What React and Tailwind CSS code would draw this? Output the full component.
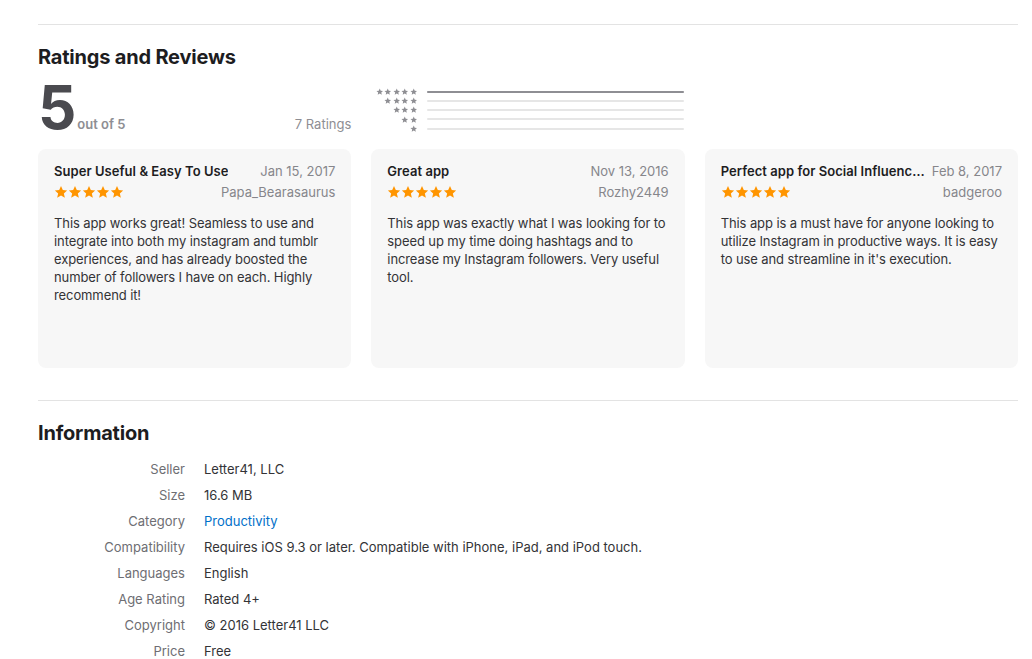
import React from "react";

const reviews = [
  {
    title: "Super Useful & Easy To Use",
    date: "Jan 15, 2017",
    author: "Papa_Bearasaurus",
    body: "This app works great! Seamless to use and integrate into both my instagram and tumblr experiences, and has already boosted the number of followers I have on each. Highly recommend it!",
  },
  {
    title: "Great app",
    date: "Nov 13, 2016",
    author: "Rozhy2449",
    body: "This app was exactly what I was looking for to speed up my time doing hashtags and to increase my Instagram followers. Very useful tool.",
  },
  {
    title: "Perfect app for Social Influencers",
    date: "Feb 8, 2017",
    author: "badgeroo",
    body: "This app is a must have for anyone looking to utilize Instagram in productive ways. It is easy to use and streamline in it's execution.",
  },
];

const info = [
  ["Seller", "Letter41, LLC"],
  ["Size", "16.6 MB"],
  ["Category", "Productivity", true],
  ["Compatibility", "Requires iOS 9.3 or later. Compatible with iPhone, iPad, and iPod touch."],
  ["Languages", "English"],
  ["Age Rating", "Rated 4+"],
  ["Copyright", "© 2016 Letter41 LLC"],
  ["Price", "Free"],
];

const Star = ({ className }) => (
  <svg viewBox="0 0 24 24" className={className}>
    <path
      fill="currentColor"
      d="M12 1.8l3.1 6.9 7.4.7-5.6 5 1.7 7.4L12 17.9l-6.6 3.9 1.7-7.4-5.6-5 7.4-.7z"
    />
  </svg>
);

const Histogram = () => {
  const rows = [5, 4, 3, 2, 1];
  return (
    <div className="flex flex-col pt-[10px]">
      {rows.map((n) => (
        <div key={n} className="flex items-center h-[9.25px]">
          <div className="w-[46px] flex justify-end gap-[1px] text-[#8e8e93]">
            {Array.from({ length: n }).map((_, i) => (
              <Star key={i} className="w-[7.5px] h-[7.5px]" />
            ))}
          </div>
          <div className="ml-[10px] w-[257px] h-[2px] bg-[#e6e6e6] rounded-full">
            {n === 5 && <div className="h-full w-full bg-[#8e8e93] rounded-full" />}
          </div>
        </div>
      ))}
    </div>
  );
};

const ReviewCard = ({ review }) => (
  <div className="bg-[#f7f7f7] rounded-[8px] h-[219px] px-[16px] pt-[13px]">
    <div className="flex items-baseline justify-between gap-[5px] text-[13px] leading-[18px]">
      <h3 className="font-semibold text-[#1d1d1f] truncate tracking-[0.05px]">{review.title}</h3>
      <span className="text-[#86868b] shrink-0">{review.date}</span>
    </div>
    <div className="flex items-center justify-between mt-[3px]">
      <div className="flex text-[#ff9500]">
        {Array.from({ length: 5 }).map((_, i) => (
          <Star key={i} className="w-[14px] h-[14px]" />
        ))}
      </div>
      <span className="text-[13px] leading-[18px] text-[#86868b]">{review.author}</span>
    </div>
    <p className="mt-[13px] text-[13px] leading-[18px] text-[#333336] tracking-[-0.1px]">{review.body}</p>
  </div>
);

export default function App() {
  return (
    <div className="bg-white min-h-[659px] font-['Inter',sans-serif] antialiased">
      <div className="ml-[38px] w-[980px] pt-[24px]">
        {/* Ratings and Reviews */}
        <section className="border-t border-[#e3e3e3] pt-[20px]">
          <h2 className="text-[20px] leading-[24px] font-bold text-[#1d1d1f] tracking-[-0.2px]">Ratings and Reviews</h2>

          <div className="grid grid-cols-3 gap-x-[20px] mt-[8px] h-[64px]">
            <div className="flex items-baseline">
              <span className="text-[60px] leading-[60px] font-bold text-[#4a4a4f] tracking-[-2px]">5</span>
              <span className="ml-[3px] text-[13px] font-semibold text-[#8e8e93]">out of 5</span>
              <span className="ml-auto text-[13px] text-[#8e8e93]">7 Ratings</span>
            </div>
            <Histogram />
          </div>

          <div className="grid grid-cols-3 gap-x-[20px] mt-[8px]">
            {reviews.map((r) => (
              <ReviewCard key={r.title} review={r} />
            ))}
          </div>
        </section>

        {/* Information */}
        <section className="border-t border-[#e3e3e3] mt-[32px] pt-[20px]">
          <h2 className="text-[20px] leading-[24px] font-bold text-[#1d1d1f] tracking-[-0.2px]">Information</h2>
          <dl className="mt-[15px] flex flex-col gap-[8px] text-[13px] leading-[18px]">
            {info.map(([label, value, link]) => (
              <div key={label} className="flex">
                <dt className="w-[147px] text-right text-[#6e6e73]">{label}</dt>
                <dd className={`ml-[19px] ${link ? "text-[#0070c9]" : "text-[#333336]"}`}>{value}</dd>
              </div>
            ))}
          </dl>
        </section>
      </div>
    </div>
  );
}
